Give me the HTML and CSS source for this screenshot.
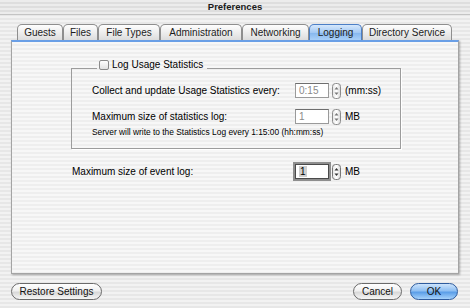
FILE: index.html
```html
<!DOCTYPE html>
<html lang="en">
<head>
  <meta charset="UTF-8">
  <title>Preferences</title>
  <link rel="stylesheet" href="styles.css">
</head>
<body>
<div class="window">
  <div class="titlebar">Preferences</div>

  <div class="content">
    <ul class="tabs">
      <li>Guests</li>
      <li>Files</li>
      <li>File Types</li>
      <li>Administration</li>
      <li>Networking</li>
      <li class="active">Logging</li>
      <li>Directory Service</li>
    </ul>

    <div class="pane">
      <fieldset class="group">
        <legend><span class="check"></span>Log Usage Statistics</legend>

        <div class="row first">
          <span class="label">Collect and update Usage Statistics every:</span>
          <span class="field dim">0:15</span>
          <svg class="stepper" width="9" height="16" viewBox="0 0 9 16">
            <defs>
              <linearGradient id="st1" x1="0" y1="0" x2="1" y2="0">
                <stop offset="0" stop-color="#e4e4e4"/>
                <stop offset="0.5" stop-color="#ffffff"/>
                <stop offset="1" stop-color="#d6d6d6"/>
              </linearGradient>
            </defs>
            <rect x="0.5" y="0.5" width="8" height="15" rx="3" fill="url(#st1)" stroke="#8c8c8c"/>
            <path d="M4.5 4 L6.5 6.5 L2.5 6.5 Z" fill="#777"/>
            <path d="M4.5 12 L6.5 9.5 L2.5 9.5 Z" fill="#777"/>
          </svg>
          <span class="unit">(mm:ss)</span>
        </div>

        <div class="row second">
          <span class="label">Maximum size of statistics log:</span>
          <span class="field dim">1</span>
          <svg class="stepper" width="9" height="16" viewBox="0 0 9 16">
            <rect x="0.5" y="0.5" width="8" height="15" rx="3" fill="url(#st1)" stroke="#8c8c8c"/>
            <path d="M4.5 4 L6.5 6.5 L2.5 6.5 Z" fill="#777"/>
            <path d="M4.5 12 L6.5 9.5 L2.5 9.5 Z" fill="#777"/>
          </svg>
          <span class="unit">MB</span>
        </div>

        <p class="note">Server will write to the Statistics Log every 1:15:00 (hh:mm:ss)</p>
      </fieldset>

      <div class="row event">
        <span class="label">Maximum size of event log:</span>
        <span class="field focus"><span class="sel">1</span></span>
        <svg class="stepper" width="9" height="16" viewBox="0 0 9 16">
          <rect x="0.5" y="0.5" width="8" height="15" rx="3" fill="url(#st1)" stroke="#777"/>
          <path d="M4.5 4 L6.5 6.5 L2.5 6.5 Z" fill="#333"/>
          <path d="M4.5 12 L6.5 9.5 L2.5 9.5 Z" fill="#333"/>
        </svg>
        <span class="unit">MB</span>
      </div>
    </div>

    <div class="buttons">
      <button class="btn restore">Restore Settings</button>
      <span class="spacer"></span>
      <button class="btn cancel">Cancel</button>
      <button class="btn ok">OK</button>
    </div>
  </div>
</div>
</body>
</html>
```

FILE: styles.css
```css
* {
  box-sizing: border-box;
}

body {
  margin: 0;
  font-family: "Liberation Sans", Arial, sans-serif;
  font-size: 10px;
  color: #000;
}

.window {
  width: 470px;
  height: 308px;
  background: repeating-linear-gradient(to bottom, #f2f2f2 0, #f2f2f2 2px, #e7e7e7 2px, #e7e7e7 4px);
}

.titlebar {
  height: 15px;
  line-height: 14px;
  text-align: center;
  font-weight: bold;
  font-size: 9.5px;
  color: #1a1a1a;
  border-bottom: 1px solid #c4c4c4;
  background: repeating-linear-gradient(to bottom, #ececec 0, #ececec 2px, #dedede 2px, #dedede 4px);
}

.content {
  padding: 9px 11px 0 11px;
}

/* tabs */
.tabs {
  list-style-type: none;
  margin: 0 0 0 6px;
  padding: 0;
  display: flex;
  height: 16px;
}

.tabs li {
  height: 16px;
  line-height: 15px;
  text-align: center;
  color: #1c1c1c;
  border: 1px solid #8e8e8e;
  border-bottom: none;
  border-radius: 5px 5px 0 0;
  background: linear-gradient(to bottom, #fefefe, #ececec 55%, #dcdcdc);
}

.tabs li:nth-child(1) { width: 46px; }
.tabs li:nth-child(2) { width: 35px; }
.tabs li:nth-child(3) { width: 62px; }
.tabs li:nth-child(4) { width: 82px; }
.tabs li:nth-child(5) { width: 67px; }
.tabs li:nth-child(6) { width: 53px; }
.tabs li:nth-child(7) { width: 90px; }

.tabs li.active {
  border-color: #4c7fc6;
  background: linear-gradient(to bottom, #d6e8fc, #a3c9f4 50%, #84b6ee 51%, #a9d0f8);
}

/* pane */
.pane {
  height: 234px;
  border: 1px solid #a4a4a4;
  border-top: 2px solid #6a9fe6;
  box-shadow: 1px 1px 2px rgba(0, 0, 0, 0.3);
  background: repeating-linear-gradient(to bottom, #f7f7f7 0, #f7f7f7 2px, #eeeeee 2px, #eeeeee 4px);
  padding-top: 17px;
}

.group {
  margin: 0 0 0 59px;
  width: 330px;
  padding: 0 0 11px 20px;
  border: 1px solid #9c9c9c;
  box-shadow: 1px 1px 0 #fff;
}

.group legend {
  margin-left: 5px;
  padding: 0 4px 6px 2px;
  line-height: 12px;
  display: flex;
  align-items: center;
}

.check {
  width: 10px;
  height: 10px;
  margin-right: 3px;
  border: 1px solid #8a8a8a;
  border-radius: 2px;
  background: linear-gradient(to bottom, #ffffff, #e2e2e2);
}

.row {
  display: flex;
  align-items: center;
  height: 15px;
}

.row.first {
  margin-top: 6px;
}

.row.second {
  margin-top: 11px;
}

.label {
  width: 203px;
}

.event {
  margin: 15px 0 0 60px;
}

.event .label {
  width: 223px;
}

.field {
  width: 34px;
  height: 15px;
  line-height: 13px;
  padding-left: 3px;
  background: #fff;
  border: 1px solid #9a9a9a;
  border-top-color: #6e6e6e;
}

.field.dim {
  color: #8a8a8a;
}

.field.focus {
  border-color: #4a4a4a;
  box-shadow: 0 0 0 2px #8e8e8e;
}

.sel {
  background: #cfcfcf;
  padding: 0 1px;
}

.stepper {
  margin-left: 3px;
}

.unit {
  margin-left: 4px;
}

.note {
  margin: 3px 0 0 0;
  font-size: 8.4px;
  line-height: 10px;
}

/* buttons */
.buttons {
  display: flex;
  gap: 8px;
  margin-top: 9px;
  padding-right: 1px;
}

.spacer {
  flex: 1;
}

.btn {
  height: 17px;
  padding: 0;
  font-family: "Liberation Sans", Arial, sans-serif;
  font-size: 10px;
  color: #111;
  border: 1px solid #6a6a6a;
  border-radius: 9px;
  background: linear-gradient(to bottom, #ffffff, #f0f0f0 45%, #d8d8d8 55%, #f6f6f6);
}

.restore { width: 91px; }
.cancel { width: 49px; }

.ok {
  width: 48px;
  border-color: #2f5c9e;
  background: linear-gradient(to bottom, #cde4fc, #8fbff2 45%, #5b9ee8 55%, #a6d2fb);
}
```
